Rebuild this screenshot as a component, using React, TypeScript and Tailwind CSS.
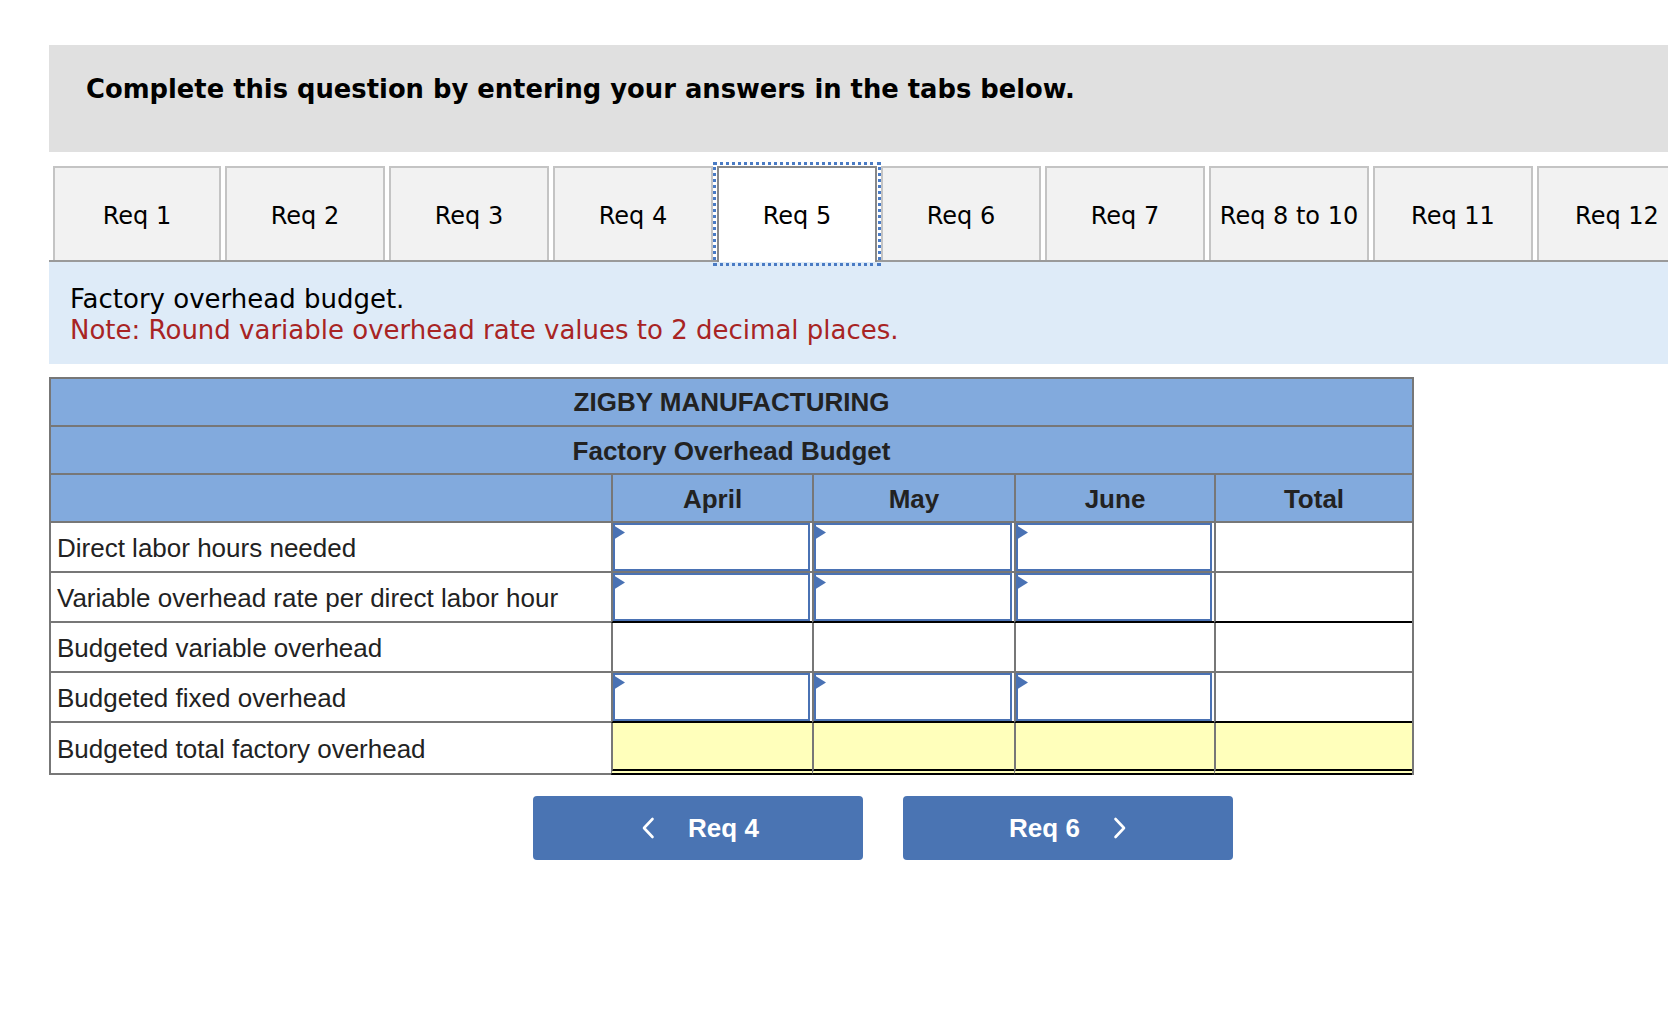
import React from "react";

const tabs = ["Req 1", "Req 2", "Req 3", "Req 4", "Req 5", "Req 6", "Req 7", "Req 8 to 10", "Req 11", "Req 12"];

const rows: { label: string; inputs: boolean; black: boolean; total?: boolean }[] = [
  { label: "Direct labor hours needed", inputs: true, black: false },
  { label: "Variable overhead rate per direct labor hour", inputs: true, black: true },
  { label: "Budgeted variable overhead", inputs: false, black: false },
  { label: "Budgeted fixed overhead", inputs: true, black: true },
  { label: "Budgeted total factory overhead", inputs: false, black: false, total: true },
];

function InputCell() {
  return (
    <div className="relative h-full w-full pr-[2px]">
      <input
        type="text"
        aria-label="answer"
        className="block h-full w-full border-2 border-[#4a72b4] bg-white outline-none"
      />
      <svg className="absolute left-0 top-[2px]" width="12" height="15" viewBox="0 0 12 15" aria-hidden="true">
        <polygon points="0,0 12,7.5 0,15" fill="#4a72b4" />
      </svg>
    </div>
  );
}

function Chevron({ dir }: { dir: "left" | "right" }) {
  return (
    <svg width="14" height="22" viewBox="0 0 14 22" fill="none" aria-hidden="true">
      {dir === "left" ? (
        <path d="M11.5 2 L3 11 L11.5 20" stroke="white" strokeWidth="2.6" strokeLinecap="round" strokeLinejoin="round" />
      ) : (
        <path d="M2.5 2 L11 11 L2.5 20" stroke="white" strokeWidth="2.6" strokeLinecap="round" strokeLinejoin="round" />
      )}
    </svg>
  );
}

export default function App() {
  const verdana = { fontFamily: '"DejaVu Sans", Verdana, sans-serif' };
  const arial = { fontFamily: '"Liberation Sans", Arial, sans-serif' };
  return (
    <div className="min-h-[1036px] w-full overflow-hidden bg-white pt-[45px]">
      <div className="ml-[49px] w-[1700px]">
        {/* Instruction header */}
        <div className="h-[107px] bg-[#e0e0e0] pl-[37px] pt-[29px]" style={verdana}>
          <p className="text-[25.8px] font-bold leading-[30px] text-black">
            Complete this question by entering your answers in the tabs below.
          </p>
        </div>

        {/* Tabs */}
        <div className="mt-[14px] flex gap-1 border-b-2 border-[#9a9a9a] pl-1" style={verdana}>
          {tabs.map((t, i) =>
            t === "Req 5" ? (
              <div
                key={t}
                className="relative z-10 -mb-[2px] flex h-[96px] w-[160px] items-center justify-center border-2 border-b-0 border-[#888] bg-white pb-[2px] pt-[4px] text-[24px] text-black outline-[3px] outline-offset-[1px] outline-dotted outline-[#4a7bc4]"
              >
                {t}
              </div>
            ) : (
              <div
                key={t}
                className={`flex h-[94px] items-center justify-center border-2 border-b-0 border-[#c4c4c4] bg-[#f2f2f2] pt-[4px] text-[24px] text-black ${
                  i === 0 ? "w-[168px]" : "w-[160px]"
                }`}
              >
                {t}
              </div>
            )
          )}
        </div>

        {/* Instruction band */}
        <div className="h-[102px] bg-[#deebf8] pl-[21px] pt-[22px] text-[26px] leading-[31px]" style={verdana}>
          <p className="text-black">Factory overhead budget.</p>
          <p className="text-[#a82424]">Note: Round variable overhead rate values to 2 decimal places.</p>
        </div>

        {/* Table */}
        <div className="mt-[13px] w-[1365px] border-x-2 border-t-2 border-[#777] text-[26px] text-[#222]" style={arial}>
          <div className="flex h-[48px] items-center justify-center border-b-2 border-[#777] bg-[#82aadd] pt-[1px] font-bold">
            ZIGBY MANUFACTURING
          </div>
          <div className="flex h-[48px] items-center justify-center border-b-2 border-[#777] bg-[#82aadd] pt-[2px] font-bold">
            Factory Overhead Budget
          </div>
          <div className="grid h-[48px] grid-cols-[560px_201px_202px_200px_198px] bg-[#82aadd] font-bold">
            <div className="border-b-2 border-[#777]" />
            {["April", "May", "June", "Total"].map((m) => (
              <div key={m} className="flex items-center justify-center border-b-2 border-l-2 border-[#777] pt-[2px]">
                {m}
              </div>
            ))}
          </div>
          {rows.map((r) => (
            <div
              key={r.label}
              className={`grid grid-cols-[560px_201px_202px_200px_198px] ${r.total ? "h-[52px]" : "h-[50px]"}`}
            >
              <div className="flex items-center border-b-2 border-[#777] bg-white pl-[6px] pt-[2px]">{r.label}</div>
              {[0, 1, 2, 3].map((c) => {
                const bottom = r.total
                  ? "border-b-[6px] border-double border-b-black"
                  : r.black
                  ? "border-b-2 border-b-black"
                  : "border-b-2 border-b-[#777]";
                return (
                  <div
                    key={c}
                    className={`border-l-2 border-l-[#777] ${bottom} ${r.total ? "bg-[#ffffbb]" : "bg-white"}`}
                  >
                    {r.inputs && c < 3 ? <InputCell /> : null}
                  </div>
                );
              })}
            </div>
          ))}
        </div>

        {/* Navigation buttons */}
        <div className="mt-[21px] flex gap-10 pl-[484px]" style={arial}>
          <button className="flex h-[64px] w-[330px] items-center justify-center gap-[33px] rounded-[4px] bg-[#4a74b3] pl-[4px] text-[26px] font-bold text-white">
            <Chevron dir="left" />
            <span>Req 4</span>
          </button>
          <button className="flex h-[64px] w-[330px] items-center justify-center gap-[33px] rounded-[4px] bg-[#4a74b3] text-[26px] font-bold text-white">
            <span>Req 6</span>
            <Chevron dir="right" />
          </button>
        </div>
      </div>
    </div>
  );
}
